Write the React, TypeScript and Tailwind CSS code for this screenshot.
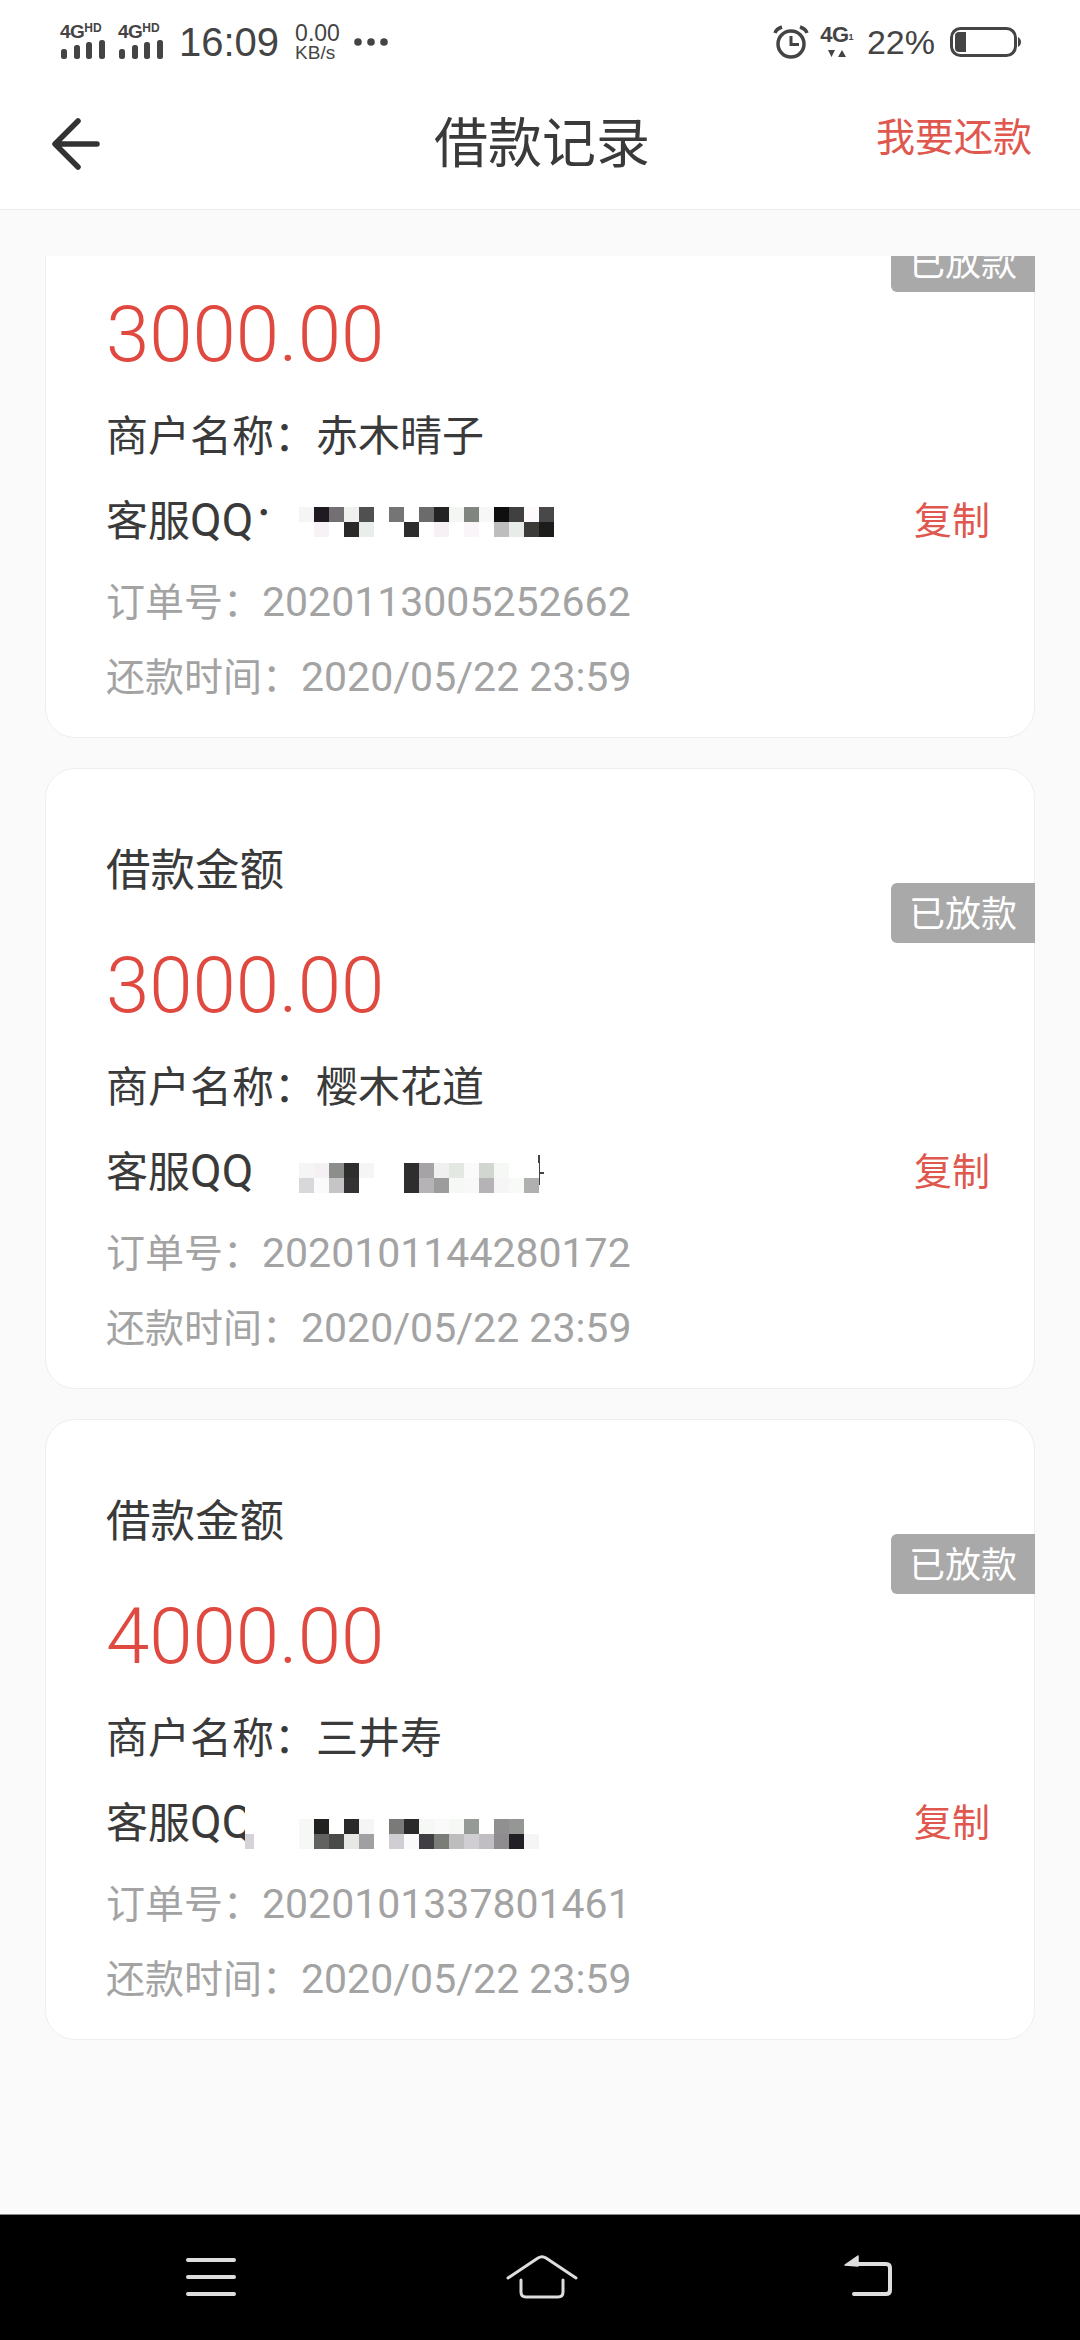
import React from "react";

const F = "font-['Roboto','Noto_Sans_CJK_SC',sans-serif]";

function Signal() {
  return (
    <div className="flex w-[45px] flex-col items-start text-[#444]">
      <div className="flex h-[15px] items-start font-['Liberation_Sans',sans-serif] font-bold leading-none">
        <span className="text-[19px] leading-[15px] tracking-[-0.5px]">4G</span>
        <span className="text-[12px] leading-[9px]">HD</span>
      </div>
      <svg width="45" height="20" viewBox="0 0 45 20" className="mt-[1px]">
        <rect x="1" y="9" width="6" height="10" rx="2.500" fill="#444" />
        <rect x="14" y="5" width="6" height="14" rx="2.500" fill="#444" />
        <rect x="26" y="2" width="6" height="17" rx="2.500" fill="#444" />
        <rect x="39" y="0" width="6" height="19" rx="2.500" fill="#444" />
      </svg>
    </div>
  );
}

function StatusBar() {
  return (
    <div className="flex h-[84px] items-center justify-between pl-[60px] pr-[59px] font-['Liberation_Sans',sans-serif] text-[#444]">
      <div className="flex items-center">
        <Signal />
        <div className="ml-[13px]"><Signal /></div>
        <span className="ml-[16px] text-[40px] leading-none">16:09</span>
        <div className="ml-[16px] flex flex-col items-start">
          <span className="text-[23px] leading-[21px]">0.00</span>
          <span className="text-[19px] leading-[17px]">KB/s</span>
        </div>
        <svg width="34" height="8" viewBox="0 0 34 8" className="ml-[14px]">
          <circle cx="4" cy="4" r="3.800" fill="#444" />
          <circle cx="17" cy="4" r="3.800" fill="#444" />
          <circle cx="30" cy="4" r="3.800" fill="#444" />
        </svg>
      </div>
      <div className="flex items-center">
        <svg width="36" height="34" viewBox="0 0 36 34" fill="none" stroke="#444">
          <circle cx="18" cy="19" r="13" strokeWidth="3.500" />
          <path d="M18 11v8.500h8" strokeWidth="3" />
          <path d="M2 8c1-3 4-5 7-6M34 8c-1-3-4-5-7-6" strokeWidth="3.500" />
        </svg>
        <div className="ml-[11px] flex w-[34px] flex-col items-center">
          <div className="flex items-start font-bold leading-none">
            <span className="text-[22px] leading-[18px] tracking-[-0.5px]">4G</span>
            <span className="mt-[6px] text-[9px] leading-[10px]">1</span>
          </div>
          <svg width="18" height="10" viewBox="0 0 18 10" className="mt-[5px]">
            <path d="M0 1h7L3.500 8zM10 8h8l-4-7z" fill="#444" />
          </svg>
        </div>
        <span className="ml-[13px] text-[34px] leading-none">22%</span>
        <svg width="71" height="30" viewBox="0 0 71 30" className="ml-[15px]" fill="none">
          <rect x="1.500" y="1.500" width="64" height="27" rx="9" stroke="#444" strokeWidth="3" />
          <path d="M5 9a4 4 0 0 1 4-4h7v20H9a4 4 0 0 1-4-4z" fill="#444" />
          <path d="M68 10c2 1 3 3 3 5s-1 4-3 5z" fill="#444" />
        </svg>
      </div>
    </div>
  );
}

function Header() {
  return (
    <div className={`grid h-[126px] grid-cols-3 items-center border-b border-[#ececec] pl-[52px] pr-[48px] ${F}`}>
      <svg width="48" height="52" viewBox="0 0 48 52" fill="none" stroke="#333" strokeWidth="5.500" strokeLinecap="round" strokeLinejoin="round" className="mb-[6px]">
        <path d="M45 26H4M26 3L3 26l23 23" />
      </svg>
      <div className="mb-[4px] justify-self-center text-[54px] leading-[64px] text-[#3a3a3a]">借款记录</div>
      <div className="mb-[18px] justify-self-end text-[39px] leading-[50px] text-[#e0574e]">我要还款</div>
    </div>
  );
}

type Box = { l: number; t: number; w: number; h: number; c: string };
type CardData = {
  amount: string;
  name: string;
  qq: string;
  order: string;
  mosaic: string[][];
  mosaicTop: number;
  boxes: Box[];
};

function Card({ d }: { d: CardData }) {
  return (
    <div className={`relative h-[621px] rounded-[30px] border border-[#eeeeee] bg-white pl-[60px] pr-[44px] pt-[72px] ${F}`}>
      <div className="text-[44.5px] leading-[60px] text-[#3a3a3a]">借款金额</div>
      <div className="absolute right-[-1px] top-[114px] flex h-[60px] w-[144px] items-center justify-center rounded-l-[6px] bg-[#a9a9a9] pt-[4px] text-[36px] leading-none text-white">已放款</div>
      <div className="mt-[40px] text-[78px] font-light leading-[90px] text-[#e0493f]">{d.amount}</div>
      <div className="mt-[27px] text-[42px] leading-[60px] text-[#3a3a3a]">商户名称：{d.name}</div>
      <div className="relative mt-[23px] flex items-center justify-between">
        <span className="text-[42px] leading-[60px] text-[#3a3a3a]">
          客服<span className="text-[46px]">QQ</span>{d.qq}
        </span>
        <span className="text-[38px] leading-[60px] text-[#e0574e]">复制</span>
        {d.boxes.map((b, i) => (
          <div key={i} className="absolute" style={{ left: b.l, top: b.t, width: b.w, height: b.h, background: b.c }} />
        ))}
        <div className="absolute left-[193px] flex flex-col" style={{ top: d.mosaicTop }}>
          {d.mosaic.map((r, i) => (
            <div key={i} className="flex h-[15px]">
              {r.map((c, j) => (
                <div key={j} className="h-[15px] w-[15px]" style={{ background: c }} />
              ))}
            </div>
          ))}
        </div>
      </div>
      <div className="mt-[20px] text-[39px] leading-[60px] text-[#a3a3a3]">
        订单号：<span className="text-[41px]">{d.order}</span>
      </div>
      <div className="mt-[14px] text-[39px] leading-[60px] text-[#a3a3a3]">
        还款时间：<span className="text-[41px]">2020/05/22 23:59</span>
      </div>
    </div>
  );
}

const W = "#ffffff";
const cards: CardData[] = [
  {
    amount: "3000.00",
    name: "赤木晴子",
    qq: "：",
    order: "2020113005252662",
    mosaicTop: 17,
    boxes: [
      { l: 150, t: 32, w: 45, h: 30, c: W },
      { l: 166, t: 0, w: 30, h: 60, c: W },
    ],
    mosaic: [
      ["#f5f5f5", "#1f1a22", "#737073", "#eef1ee", "#505050", W, "#757575", W, "#6b6b6b", "#242424", "#f3f6f3", "#808580", "#f7f7f7", "#0f0f0f", "#404040", "#fdf9fd", "#484848"],
      [W, "#f7f2f5", W, "#2a2a2a", "#eaeeea", W, W, "#2d2d2d", W, "#f7f0f5", W, "#f9f5f8", W, "#bdbdbd", "#e8ece8", "#3d3a3a", "#1c1c1a"],
    ],
  },
  {
    amount: "3000.00",
    name: "樱木花道",
    qq: "",
    order: "2020101144280172",
    mosaicTop: 22,
    boxes: [
      { l: 432, t: 14, w: 2, h: 30, c: "#444444" },
      { l: 428, t: 31, w: 10, h: 2, c: "#444444" },
    ],
    mosaic: [
      ["#f5f5f5", "#f5f0f3", "#8c8e8c", "#2e2e2e", "#f5f5f5", W, W, "#2e2e2e", "#a5a3a5", "#f0f0f0", "#e3e8e3", "#fafafa", "#d2d6d0", "#f5f8f5", W, W],
      ["#d8d8da", "#fafafa", "#c6c4c6", "#333333", W, W, W, "#2e2e2e", "#b5b3b5", "#9c9c9c", "#f5f8f5", "#f8f8f8", "#b5b3b5", "#f5f5f5", "#f8faf8", "#b0b0b0"],
    ],
  },
  {
    amount: "4000.00",
    name: "三井寿",
    qq: "",
    order: "2020101337801461",
    mosaicTop: 27,
    boxes: [
      { l: 139, t: 0, w: 54, h: 60, c: W },
      { l: 139, t: 42, w: 9, h: 15, c: "#d5d3d8" },
    ],
    mosaic: [
      ["#f5f8f5", "#222220", W, "#2a2a2a", "#f5f5f5", W, "#7a7a78", "#2a2a2a", "#f5f8f5", "#fafafa", "#f5f8f5", "#959a96", W, "#909090", "#959795", W],
      ["#f5f8f5", "#626260", "#4a4a48", "#e5e8e5", "#a0a0a2", W, "#d0ced2", "#fafafa", "#403e42", "#7a7c78", "#bdbdbd", "#d0ced2", "#c0bec2", "#8e8c8e", "#222024", "#f5f5f5"],
    ],
  },
];

function NavBar() {
  return (
    <div className="flex h-[126px] items-start border-t border-[#8a8a8a] bg-black pl-[186px] pt-[40px]">
      <svg width="50" height="44" viewBox="0 0 50 44" stroke="#dedede" strokeWidth="4" strokeLinecap="round" className="shrink-0">
        <path d="M2 5h46M2 22h46M2 39h46" />
      </svg>
      <svg width="72" height="44" viewBox="0 0 72 44" fill="none" stroke="#dedede" strokeWidth="3" strokeLinecap="round" strokeLinejoin="round" className="ml-[270px] shrink-0">
        <path d="M2 23L32 3q4-2.500 8 0L70 23" />
        <path d="M15 25v12q0 5 5 5h32q5 0 5-5V25" />
      </svg>
      <svg width="50" height="44" viewBox="0 0 50 44" fill="none" className="ml-[265px] shrink-0">
        <path d="M2 10L15 1v10z" fill="#dedede" stroke="#dedede" strokeWidth="1.500" strokeLinejoin="round" />
        <path d="M14 9h29q4 0 4 4v22q0 4-4 4H11" stroke="#dedede" strokeWidth="4" strokeLinecap="round" />
      </svg>
    </div>
  );
}

export default function App() {
  return (
    <div className="flex h-[2340px] w-[1080px] flex-col overflow-hidden bg-[#fafafa]">
      <div className="bg-white">
        <StatusBar />
        <Header />
      </div>
      <div className="mt-[46px] flex-1 overflow-hidden px-[45px]">
        <div className="mt-[-139px] flex flex-col gap-[30px]">
          {cards.map((c, i) => (
            <Card key={i} d={c} />
          ))}
        </div>
      </div>
      <NavBar />
    </div>
  );
}
